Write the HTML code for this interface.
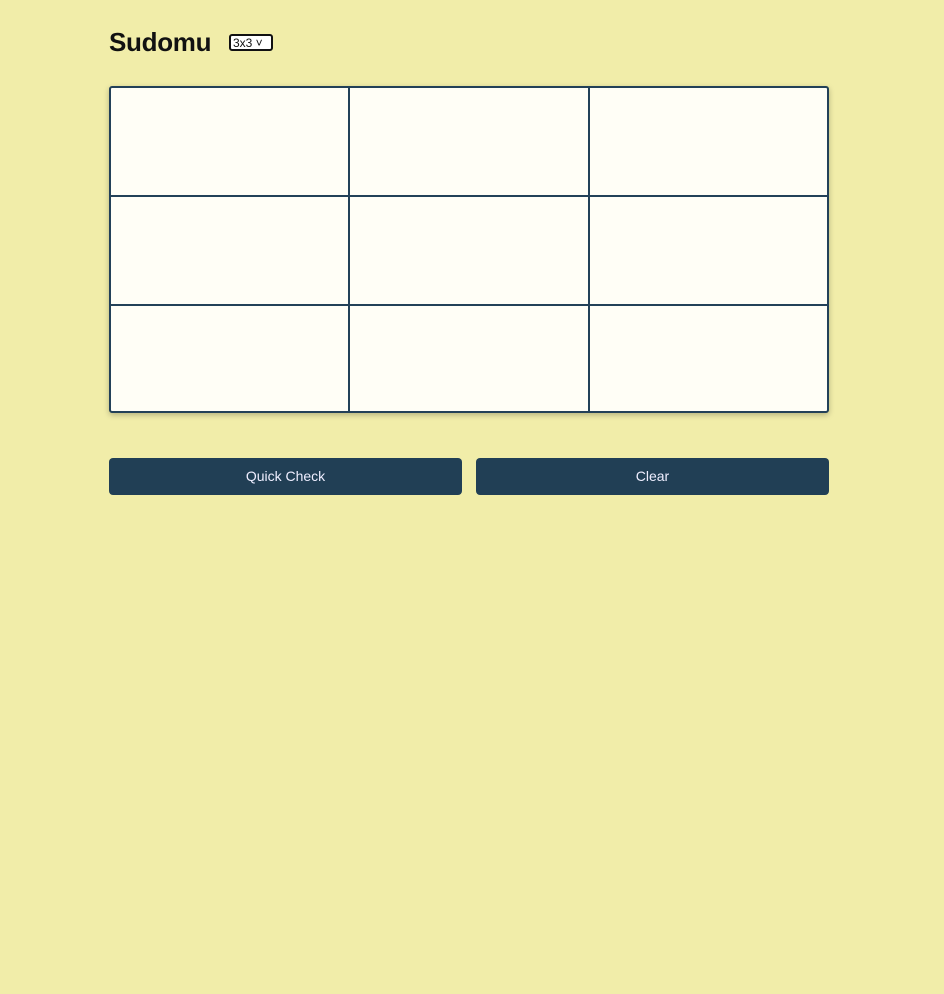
<!DOCTYPE html>
<html><head><style>
body{margin:0;width:944px;height:994px;background:#f1eda9;font-family:"Liberation Sans",sans-serif;position:relative;overflow:hidden}
h1{position:absolute;left:109px;top:27px;margin:0;font-size:26px;font-weight:bold;color:#111;letter-spacing:-0.3px}
.sel{position:absolute;left:229px;top:34px;width:44px;height:17px;border:2px solid #111;border-radius:3px;font-size:12px;line-height:14px;box-sizing:border-box;padding-left:2px;background:#fff;color:#111}
.grid{position:absolute;left:109px;top:86px;width:720px;height:327px;box-sizing:border-box;border:2px solid #234158;border-radius:3px;background:#fffef6;box-shadow:0 2px 6px rgba(0,0,0,.25)}
.v,.h{position:absolute;background:#234158}
.v{width:2px;top:0;bottom:0}.h{height:2px;left:0;right:0}
.b{position:absolute;top:458px;height:37px;width:353px;background:#213f55;border-radius:4px;color:#eef;font-size:14px;text-align:center;line-height:37px}
</style></head><body>
<h1>Sudomu</h1>
<div class="sel">3x3 ˅</div>
<div class="grid">
<div class="v" style="left:237px"></div><div class="v" style="left:477px"></div>
<div class="h" style="top:107px"></div><div class="h" style="top:216px"></div>
</div>
<div class="b" style="left:109px">Quick Check</div>
<div class="b" style="left:476px">Clear</div>
</body></html>
